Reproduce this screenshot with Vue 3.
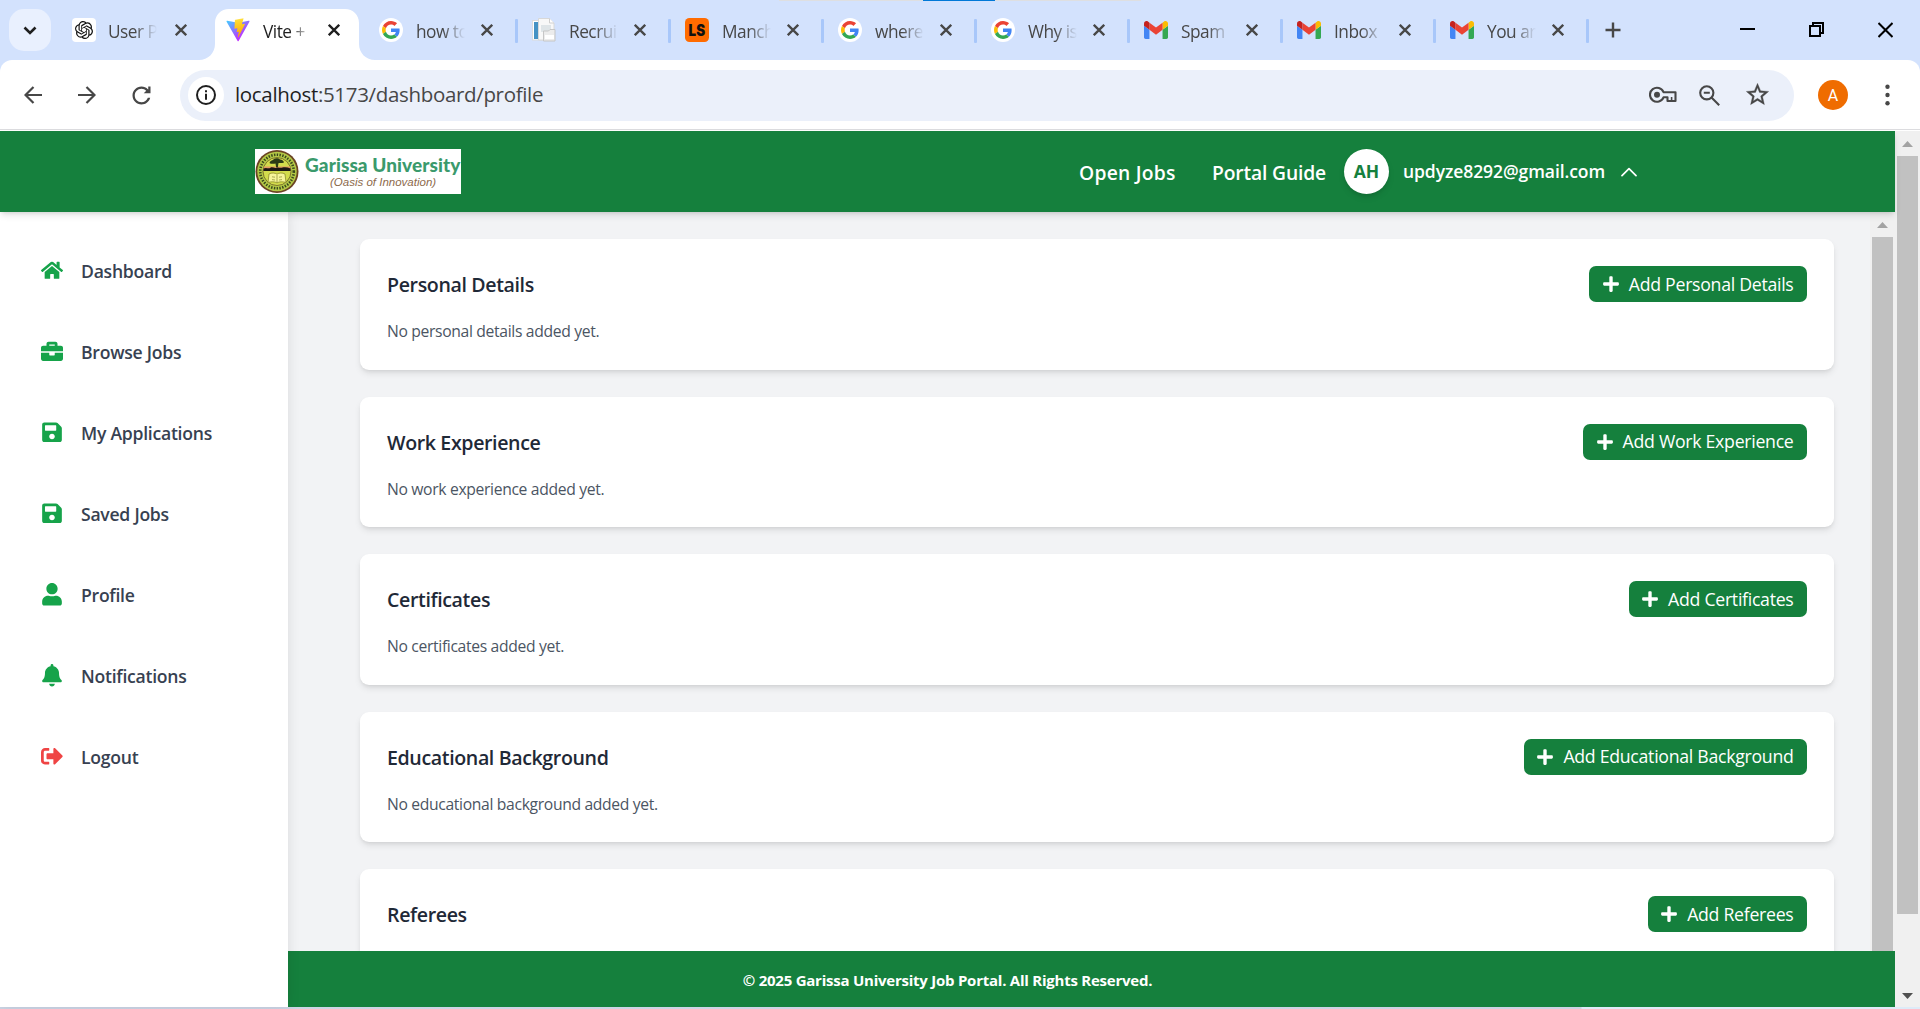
<script setup>
const tabs = [
  { icon: 'openai', title: 'User P' },
  { icon: 'vite', title: 'Vite +', active: true },
  { icon: 'google', title: 'how to', sep: true },
  { icon: 'page', title: 'Recrui', sep: true },
  { icon: 'ls', title: 'Manch', sep: true },
  { icon: 'google', title: 'where', sep: true },
  { icon: 'google', title: 'Why is', sep: true },
  { icon: 'gmail', title: 'Spam', sep: true },
  { icon: 'gmail', title: 'Inbox', sep: true },
  { icon: 'gmail', title: 'You ar', sep: true },
]

const icons = {
  home: { box: '0 0 576 512', d: 'M280.37 148.26L96 300.11V464a16 16 0 0 0 16 16l112.06-.29a16 16 0 0 0 15.92-16V368a16 16 0 0 1 16-16h64a16 16 0 0 1 16 16v95.64a16 16 0 0 0 16 16.05L464 480a16 16 0 0 0 16-16V300L295.67 148.26a12.19 12.19 0 0 0-15.3 0zM571.6 251.47L488 182.56V44.05a12 12 0 0 0-12-12h-56a12 12 0 0 0-12 12v72.61L318.47 43a48 48 0 0 0-61 0L4.34 251.47a12 12 0 0 0-1.6 16.9l25.5 31A12 12 0 0 0 45.15 301l235.22-193.74a12.19 12.19 0 0 1 15.3 0L530.9 301a12 12 0 0 0 16.9-1.6l25.5-31a12 12 0 0 0-1.7-16.93z' },
  briefcase: { box: '0 0 512 512', d: 'M320 336c0 8.84-7.16 16-16 16h-96c-8.84 0-16-7.16-16-16v-48H0v144c0 25.6 22.4 48 48 48h416c25.6 0 48-22.4 48-48V288H320v48zm144-208h-80V80c0-25.6-22.4-48-48-48H176c-25.6 0-48 22.4-48 48v48H48c-25.6 0-48 22.4-48 48v80h512v-80c0-25.6-22.4-48-48-48zm-144 0H192V96h128v32z' },
  save: { box: '0 0 448 512', d: 'M433.941 129.941l-83.882-83.882A48 48 0 0 0 316.118 32H48C21.49 32 0 53.49 0 80v352c0 26.51 21.49 48 48 48h352c26.51 0 48-21.49 48-48V163.882a48 48 0 0 0-14.059-33.941zM224 416c-35.346 0-64-28.654-64-64 0-35.346 28.654-64 64-64s64 28.654 64 64c0 35.346-28.654 64-64 64zm96-304.52V212c0 6.627-5.373 12-12 12H76c-6.627 0-12-5.373-12-12V108c0-6.627 5.373-12 12-12h228.52c3.183 0 6.235 1.264 8.485 3.515l3.48 3.48A11.996 11.996 0 0 1 320 111.48z' },
  user: { box: '0 0 448 512', d: 'M224 256c70.7 0 128-57.3 128-128S294.7 0 224 0 96 57.3 96 128s57.3 128 128 128zm89.6 32h-16.7c-22.2 10.2-46.9 16-72.9 16s-50.6-5.8-72.9-16h-16.7C60.2 288 0 348.2 0 422.4V464c0 26.5 21.5 48 48 48h352c26.5 0 48-21.5 48-48v-41.6c0-74.2-60.2-134.4-134.4-134.4z' },
  bell: { box: '0 0 448 512', d: 'M224 512c35.32 0 63.97-28.65 63.97-64H160.03c0 35.35 28.65 64 63.97 64zm215.39-149.71c-19.32-20.76-55.47-51.99-55.47-154.29 0-77.7-54.48-139.9-127.94-155.16V32c0-17.67-14.32-32-31.98-32s-31.98 14.33-31.98 32v20.84C118.56 68.1 64.08 130.3 64.08 208c0 102.3-36.15 133.53-55.47 154.29-6 6.45-8.66 14.16-8.61 21.71.11 16.4 12.98 32 32.1 32h383.8c19.12 0 32-15.6 32.1-32 .05-7.55-2.61-15.27-8.61-21.71z' },
  logout: { box: '0 0 512 512', d: 'M497 273L329 441c-15 15-41 4.5-41-17v-96H152c-13.3 0-24-10.7-24-24v-96c0-13.3 10.7-24 24-24h136V88c0-21.4 25.9-32 41-17l168 168c9.3 9.4 9.3 24.6 0 34zM192 436v-40c0-6.6-5.4-12-12-12H96c-17.7 0-32-14.3-32-32V160c0-17.7 14.3-32 32-32h84c6.6 0 12-5.4 12-12V76c0-6.6-5.4-12-12-12H96c-53 0-96 43-96 96v192c0 53 43 96 96 96h84c6.6 0 12-5.4 12-12z' },
}

const menu = [
  { icon: 'home', label: 'Dashboard' },
  { icon: 'briefcase', label: 'Browse Jobs' },
  { icon: 'save', label: 'My Applications' },
  { icon: 'save', label: 'Saved Jobs' },
  { icon: 'user', label: 'Profile' },
  { icon: 'bell', label: 'Notifications' },
  { icon: 'logout', label: 'Logout', danger: true },
]

const sections = [
  { title: 'Personal Details', empty: 'No personal details added yet.' },
  { title: 'Work Experience', empty: 'No work experience added yet.' },
  { title: 'Certificates', empty: 'No certificates added yet.' },
  { title: 'Educational Background', empty: 'No educational background added yet.' },
  { title: 'Referees' },
]
</script>

<template>
  <div class="window">
    <div class="tabstrip">
      <div class="topline"><i></i></div>
      <button class="tab-search" aria-label="Search tabs">
        <svg width="14" height="9" viewBox="0 0 14 9"><path d="M1.5 1.5 7 7l5.5-5.5" fill="none" stroke="#1f1f1f" stroke-width="2.6" /></svg>
      </button>
      <div v-for="(t, i) in tabs" :key="i" class="tab" :class="{ active: t.active, sep: t.sep, first: i === 0 }">
        <svg v-if="t.active" class="tab-shape" width="176" height="51" viewBox="0 0 176 51">
          <path d="M0 51C9 51 16 44 16 35V14C16 6 22 0 30 0H146C154 0 160 6 160 14V35C160 44 167 51 176 51Z" fill="#fff" />
        </svg>
        <svg v-if="t.icon === 'openai'" class="fav" viewBox="0 0 24 24">
          <rect width="24" height="24" rx="4" fill="#fff" />
          <path transform="translate(3 3) scale(.75)" fill="#111" d="M22.2819 9.8211a5.9847 5.9847 0 0 0-.5157-4.9108 6.0462 6.0462 0 0 0-6.5098-2.9A6.0651 6.0651 0 0 0 4.9807 4.1818a5.9847 5.9847 0 0 0-3.9977 2.9 6.0462 6.0462 0 0 0 .7427 7.0966 5.98 5.98 0 0 0 .511 4.9107 6.051 6.051 0 0 0 6.5146 2.9001A5.9847 5.9847 0 0 0 13.2599 24a6.0557 6.0557 0 0 0 5.7718-4.2058 5.9894 5.9894 0 0 0 3.9977-2.9001 6.0557 6.0557 0 0 0-.7475-7.0729zm-9.022 12.6081a4.4755 4.4755 0 0 1-2.8764-1.0408l.1419-.0804 4.7783-2.7582a.7948.7948 0 0 0 .3927-.6813v-6.7369l2.02 1.1686a.071.071 0 0 1 .038.052v5.5826a4.504 4.504 0 0 1-4.4945 4.4944zm-9.6607-4.1254a4.4708 4.4708 0 0 1-.5346-3.0137l.142.0852 4.783 2.7582a.7712.7712 0 0 0 .7806 0l5.8428-3.3685v2.3324a.0804.0804 0 0 1-.0332.0615L9.74 19.9502a4.4992 4.4992 0 0 1-6.1408-1.6464zM2.3408 7.8956a4.485 4.485 0 0 1 2.3655-1.9728V11.6a.7664.7664 0 0 0 .3879.6765l5.8144 3.3543-2.0201 1.1685a.0757.0757 0 0 1-.071 0l-4.8303-2.7865A4.504 4.504 0 0 1 2.3408 7.872zm16.5963 3.8558L13.1038 8.364 15.1192 7.2a.0757.0757 0 0 1 .071 0l4.8303 2.7913a4.4944 4.4944 0 0 1-.6765 8.1042v-5.6772a.79.79 0 0 0-.407-.667zm2.0107-3.0231l-.142-.0852-4.7735-2.7818a.7759.7759 0 0 0-.7854 0L9.409 9.2297V6.8974a.0662.0662 0 0 1 .0284-.0615l4.8303-2.7866a4.4992 4.4992 0 0 1 6.6802 4.66zM8.3065 12.863l-2.02-1.1638a.0804.0804 0 0 1-.038-.0567V6.0742a4.4992 4.4992 0 0 1 7.3757-3.4537l-.142.0805L8.704 5.459a.7948.7948 0 0 0-.3927.6813zm1.0976-2.3654l2.602-1.4998 2.6069 1.4998v2.9994l-2.5974 1.4997-2.6067-1.4997Z" />
        </svg>
        <svg v-else-if="t.icon === 'vite'" class="fav" viewBox="0 0 410 404">
          <defs>
            <linearGradient id="vite-a" x1="6" y1="33" x2="235" y2="344" gradientUnits="userSpaceOnUse"><stop stop-color="#41d1ff" /><stop offset="1" stop-color="#bd34fe" /></linearGradient>
            <linearGradient id="vite-b" x1="194.651" y1="8.818" x2="236.076" y2="292.989" gradientUnits="userSpaceOnUse"><stop stop-color="#ffea83" /><stop offset=".083" stop-color="#ffdd35" /><stop offset="1" stop-color="#ffa800" /></linearGradient>
          </defs>
          <path fill="url(#vite-a)" d="M399.641 59.5246L215.643 388.545C211.844 395.338 202.084 395.378 198.228 388.618L10.5817 59.5563C6.38087 52.1896 12.6802 43.2665 21.0281 44.7586L205.223 77.6824C206.398 77.8924 207.601 77.8904 208.776 77.6763L389.119 44.8058C397.439 43.2894 403.768 52.1434 399.641 59.5246Z" />
          <path fill="url(#vite-b)" d="M292.965 1.5744L156.801 28.2552C154.563 28.6937 152.906 30.5903 152.771 32.8664L144.395 174.33C144.198 177.662 147.258 180.248 150.51 179.498L188.42 170.749C191.967 169.931 195.172 173.055 194.443 176.622L183.18 231.775C182.422 235.487 185.907 238.661 189.532 237.56L212.947 230.446C216.577 229.344 220.065 232.527 219.297 236.242L201.398 322.875C200.278 328.294 207.486 331.249 210.492 326.603L212.5 323.5L323.454 102.072C325.312 98.3645 322.108 94.137 318.036 94.9228L279.014 102.454C275.347 103.161 272.227 99.746 273.262 96.1583L298.731 7.86689C299.767 4.27314 296.636 0.855181 292.965 1.5744Z" />
        </svg>
        <svg v-else-if="t.icon === 'google'" class="fav" viewBox="0 0 24 24">
          <circle cx="12" cy="12" r="12" fill="#fff" />
          <g transform="translate(3 3) scale(.375)">
            <path fill="#EA4335" d="M24 9.5c3.54 0 6.71 1.22 9.21 3.6l6.85-6.85C35.9 2.38 30.47 0 24 0 14.62 0 6.51 5.38 2.56 13.22l7.98 6.19C12.43 13.72 17.74 9.5 24 9.5z" />
            <path fill="#4285F4" d="M46.98 24.55c0-1.57-.15-3.09-.38-4.55H24v9.02h12.94c-.58 2.96-2.26 5.48-4.78 7.18l7.73 6c4.51-4.18 7.09-10.36 7.09-17.65z" />
            <path fill="#FBBC05" d="M10.53 28.59c-.48-1.45-.76-2.99-.76-4.59s.27-3.14.76-4.59l-7.98-6.19C.92 16.46 0 20.12 0 24c0 3.88.92 7.54 2.56 10.78l7.97-6.19z" />
            <path fill="#34A853" d="M24 48c6.48 0 11.93-2.13 15.89-5.81l-7.73-6c-2.15 1.45-4.92 2.3-8.16 2.3-6.26 0-11.57-4.22-13.47-9.91l-7.98 6.19C6.51 42.62 14.62 48 24 48z" />
          </g>
        </svg>
        <svg v-else-if="t.icon === 'page'" class="fav" viewBox="0 0 24 24">
          <rect x=".5" y="2.5" width="12" height="19.5" fill="#fff" stroke="#dcdcdc" />
          <rect x="2" y="4" width="4" height="17" fill="#4592c4" />
          <path d="M6.5.5h11L22 5v17H6.5z" fill="#f8f8f8" stroke="#d8d8d8" />
          <path d="M17.5.5V5H22" fill="#fff" stroke="#cfcfcf" />
          <path d="M9 7h10v7H9z" fill="#dfe5e8" />
          <path d="M11.5 13h5l1.5-1.5h5V23H11.500z" fill="#ececec" stroke="#c6c6c6" />
          <path d="M13 17h9v4h-9z" fill="#fff" />
        </svg>
        <svg v-else-if="t.icon === 'ls'" class="fav" viewBox="0 0 24 24">
          <rect width="24" height="24" rx="4.5" fill="#ff6b00" />
          <text x="3.6" y="17.6" class="ls-text" textLength="16.5" lengthAdjust="spacingAndGlyphs">LS</text>
        </svg>
        <svg v-else class="fav" viewBox="52 31 88 88">
          <path fill="#4285f4" d="M58 108h14V74L52 59v43c0 3.32 2.69 6 6 6" />
          <path fill="#34a853" d="M120 108h14c3.32 0 6-2.69 6-6V59l-20 15" />
          <path fill="#fbbc04" d="M120 48v26l20-15v-8c0-7.42-8.47-11.65-14.4-7.2" />
          <path fill="#ea4335" d="M72 74V48l24 18 24-18v26L96 92" />
          <path fill="#c5221f" d="M52 51v8l20 15V48l-5.6-4.2c-5.94-4.45-14.4-.22-14.4 7.2" />
        </svg>
        <span class="tab-title">{{ t.title }}</span>
        <svg class="tab-close" width="12" height="12" viewBox="0 0 12 12"><path d="M.8.8l10.4 10.4M11.2.8.8 11.2" /></svg>
      </div>
      <svg class="new-tab" width="16" height="16" viewBox="0 0 16 16"><path d="M8 .5v15M.5 8h15" stroke="#474747" stroke-width="2.4" /></svg>
      <div class="win-controls">
        <svg width="15" height="15" viewBox="0 0 15 15"><path d="M0 7h15" stroke="#000" stroke-width="2" /></svg>
        <svg width="15" height="15" viewBox="0 0 15 15"><path d="M1 4h10v10H1zM4 4V1h10v10h-3" fill="none" stroke="#000" stroke-width="2" /></svg>
        <svg width="15" height="16" viewBox="0 0 15 16"><path d="M.5 1l14 14M14.5 1l-14 14" stroke="#000" stroke-width="2" /></svg>
      </div>
    </div>

    <div class="toolbar-wrap">
      <div class="toolbar">
        <svg class="nav" width="18" height="18" viewBox="0 0 18 18"><path d="M18 9H2M9.5 1 1.5 9l8 8" /></svg>
        <svg class="nav" width="18" height="18" viewBox="0 0 18 18"><path d="M0 9h16M8.5 1l8 8-8 8" /></svg>
        <svg class="reload" width="27" height="27" viewBox="0 0 24 24"><path fill="#474747" d="M17.65 6.35C16.2 4.9 14.21 4 12 4c-4.42 0-7.99 3.58-7.99 8s3.57 8 7.99 8c3.73 0 6.84-2.55 7.73-6h-2.08c-.82 2.33-3.04 4-5.65 4-3.31 0-6-2.69-6-6s2.69-6 6-6c1.66 0 3.14.69 4.22 1.78L14 10h6V4h-2v2.6z" /></svg>
        <div class="omnibox">
          <span class="info">
            <svg width="20" height="20" viewBox="0 0 20 20"><circle cx="10" cy="10" r="9" fill="none" stroke="#1f1f1f" stroke-width="2" /><path d="M10 8.8v6M10 5.2v2" stroke="#1f1f1f" stroke-width="2" /></svg>
          </span>
          <span class="url"><b>localhost</b>:5173/dashboard/profile</span>
          <svg class="key" width="28" height="18" viewBox="0 0 28 18">
            <path d="M14.5 6.2A7 7 0 1 0 14.5 11.3H18.5V15H26.5V6.2Z" fill="none" stroke="#474747" stroke-width="2.1" stroke-linejoin="round" />
            <path d="M22.6 15v-4" stroke="#474747" stroke-width="1.6" /><circle cx="8" cy="8.8" r="3" fill="#474747" />
          </svg>
          <svg class="zoom" width="21" height="21" viewBox="0 0 21 21"><circle cx="7.8" cy="7.8" r="6.6" fill="none" stroke="#474747" stroke-width="2.1" /><path d="M12.5 12.5l7.7 7.7M4.8 7.8h6" stroke="#474747" stroke-width="2.1" /></svg>
          <svg class="star" width="27" height="27" viewBox="0 0 24 24"><path fill="#474747" stroke="#474747" stroke-width=".25" d="M22 9.24l-7.19-.62L12 2 9.19 8.63 2 9.24l5.46 4.73L5.82 21 12 17.27 18.18 21l-1.63-7.03L22 9.24zM12 15.4l-3.76 2.27 1-4.28-3.32-2.88 4.38-.38L12 6.1l1.71 4.04 4.38.38-3.32 2.88 1 4.28L12 15.4z" /></svg>
        </div>
        <span class="account">A</span>
        <svg class="dots" width="5" height="22" viewBox="0 0 5 22"><circle cx="2.5" cy="2.7" r="2.2" /><circle cx="2.5" cy="11" r="2.2" /><circle cx="2.5" cy="19.3" r="2.2" /></svg>
      </div>
    </div>

    <div class="viewport">
      <div class="app">
        <header class="header">
          <div class="logo">
            <svg width="44" height="45" viewBox="0 0 44 45">
              <circle cx="22" cy="22.5" r="21.5" fill="#6b4423" />
              <circle cx="22" cy="22.5" r="19.7" fill="#b3c846" />
              <circle cx="22" cy="22.5" r="16.8" fill="none" stroke="#39471c" stroke-width="2.6" stroke-dasharray="1.4 1.4" />
              <circle cx="22" cy="22.5" r="14" fill="#d3dc4c" stroke="#6a5a24" stroke-width=".8" />
              <path d="M9 17.5h26a14 14 0 0 1 .6 4H8.4a14 14 0 0 1 .6-4z" fill="#e29a62" />
              <path d="M14.5 14c1-3 3.5-2.5 4.5-4 2-1.2 5-.5 6 .6 2 .3 4 1.4 4 3-2 .8-4 .3-5.6.6l-.5 4h-1.8l-.6-3.6c-2 .4-4.6.4-6-.6z" fill="#2b3a16" />
              <path d="M8.4 19.6c3-1.6 5 .6 7-.8s4 .8 6 0 4 .6 6-.2 5-.5 8.200.8v2.600H8.400z" fill="#1b1713" />
              <path d="M14 25c2.5-1.5 6-1.2 8 .2 2-1.4 5.5-1.7 8-.2l1 8.500c-3-1-7-1-9 .4-2-1.400-6-1.400-9-.4z" fill="#f6f59a" stroke="#8b8c2a" stroke-width=".8" />
              <path d="M22 26v7.500M17 27.800l3 .4M24 28.200l3-.4M17 30.600l3 .4M24 31l3-.4" stroke="#8a8a32" stroke-width=".7" />
            </svg>
            <div class="logo-text"><strong>Garissa University</strong><em>(Oasis of Innovation)</em></div>
          </div>
          <nav class="links">
            <a class="l1">Open Jobs</a>
            <a class="l2">Portal Guide</a>
            <span class="avatar">AH</span>
            <span class="email">updyze8292@gmail.com</span>
            <svg width="16" height="10" viewBox="0 0 16 10"><path d="M1 8.7l7-7 7 7" fill="none" stroke="#fff" stroke-width="1.7" stroke-linecap="round" stroke-linejoin="round" /></svg>
          </nav>
        </header>
        <div class="body">
          <aside class="sidebar">
            <a v-for="m in menu" :key="m.label" class="item" :class="{ danger: m.danger }">
              <svg width="22" height="22.5" :viewBox="icons[m.icon].box"><path fill="currentColor" :d="icons[m.icon].d" /></svg>
              <span>{{ m.label }}</span>
            </a>
          </aside>
          <div class="content">
            <div class="scroll-area">
              <main class="cards">
                <section v-for="s in sections" :key="s.title" class="card">
                  <div class="card-text">
                    <h2>{{ s.title }}</h2>
                    <p v-if="s.empty">{{ s.empty }}</p>
                  </div>
                  <button class="add">
                    <svg width="16" height="18" viewBox="0 0 448 512"><path fill="#fff" d="M416 208H272V64c0-17.67-14.33-32-32-32h-32c-17.67 0-32 14.33-32 32v144H32c-17.67 0-32 14.33-32 32v32c0 17.67 14.33 32 32 32h144v144c0 17.67 14.33 32 32 32h32c17.67 0 32-14.33 32-32V304h144c17.67 0 32-14.33 32-32v-32c0-17.67-14.33-32-32-32z" /></svg>
                    <span>Add {{ s.title }}</span>
                  </button>
                </section>
              </main>
              <div class="scrollbar">
                <svg width="11" height="6" viewBox="0 0 11 6"><path d="M5.5 0 11 6H0z" fill="#a3a3a3" /></svg>
                <div class="thumb"></div>
              </div>
            </div>
            <footer class="footer"><span>© 2025 Garissa University Job Portal. All Rights Reserved.</span></footer>
          </div>
        </div>
      </div>
      <div class="scrollbar outer">
        <svg width="11" height="6" viewBox="0 0 11 6"><path d="M5.5 0 11 6H0z" fill="#a3a3a3" /></svg>
        <div class="thumb"></div>
        <svg class="down" width="11" height="6" viewBox="0 0 11 6"><path d="M0 0h11L5.5 6z" fill="#505050" /></svg>
      </div>
    </div>
    <div class="edge"></div>
  </div>
</template>

<style>
html, body { margin: 0; overflow: hidden; }
</style>

<style scoped>
* { box-sizing: border-box; }
svg { display: block; flex: none; }
button { border: 0; padding: 0; font: inherit; }
h2, p { margin: 0; }
.window { width: 1920px; height: 1009px; display: flex; flex-direction: column; overflow: hidden; font-family: "Open Sans", "Noto Sans", sans-serif; white-space: nowrap; background: #fff; }

.tabstrip { position: relative; height: 60px; flex: none; display: flex; background: #d3e2fd; }
.topline { position: absolute; top: 0; left: 779px; width: 362px; height: 1px; background: #dedfe1; }
.topline i { display: block; width: 72px; height: 1px; margin-left: 144px; background: #0078d7; }
.tab-search { width: 42px; height: 42px; margin: 9px 6px 0 9px; border-radius: 15px; background: #e9f0fe; display: flex; align-items: center; justify-content: center; }
.tab { position: relative; width: 153px; height: 60px; flex: none; display: flex; align-items: flex-start; color: #474747; }
.tab-shape { position: absolute; left: -11px; top: 9px; }
.fav { position: relative; width: 24px; height: 24px; margin: 18px 0 0 16px; }
.first .fav { margin-left: 15px; }
.tab-title { position: relative; width: 49px; margin: 19px 0 0 13px; font-size: 17.3px; line-height: 26px; letter-spacing: -.5px; -webkit-mask-image: linear-gradient(90deg, #000 55%, transparent); mask-image: linear-gradient(90deg, #000 55%, transparent); }
.first .tab-title { margin-left: 12px; margin-right: 2px; }
.tab-close { position: relative; margin: 24px 0 0 16px; }
.tab-close path { stroke: #474747; stroke-width: 2.3; }
.active { color: #1f1f1f; }
.active .tab-close path { stroke: #1f1f1f; }
.sep::after { content: ""; position: absolute; left: 152px; top: 19px; width: 3px; height: 24px; border-radius: 1px; background: #a8c7fa; }
.ls-text { font: 900 15.5px "Inter", sans-serif; fill: #111; }
.new-tab { margin: 22px 0 0 18px; }
.win-controls { display: flex; gap: 54px; margin: 22px 27px 0 auto; }

.toolbar-wrap { height: 71px; flex: none; background: #d3e2fd; }
.toolbar { height: 71px; border-radius: 12px 12px 0 0; background: linear-gradient(#fff 69px, #dcdcdf 69px, #dcdcdf 70px, #fff 70px); display: flex; align-items: center; padding: 0 30px 1px 24px; }
.nav { margin-right: 36px; }
.nav path { fill: none; stroke: #474747; stroke-width: 2.2; }
.reload { margin: 0 25.5px 0 -4.5px; }
.omnibox { width: 1614px; height: 51px; flex: none; border-radius: 26px; background: #ebf0fa; display: flex; align-items: center; padding-left: 8px; }
.info { width: 36px; height: 36px; border-radius: 50%; background: #fff; display: flex; align-items: center; justify-content: center; }
.url { margin: 0 0 2px 11px; flex: 1; font-size: 20.5px; line-height: 30px; letter-spacing: -.33px; color: #474747; }
.url b { font-weight: 400; color: #1f1f1f; }
.zoom { margin-left: 22.5px; }
.star { margin: 0 23px 1px 24px; }
.account { width: 30px; height: 30px; margin-left: 24px; border-radius: 50%; background: #ef6c00; color: #fff; font: 16px/31px Roboto, sans-serif; text-align: center; }
.dots { margin-left: auto; fill: #474747; }

.viewport { height: 876px; flex: none; display: flex; }
.app { width: 1895px; display: flex; flex-direction: column; }
.header { position: relative; z-index: 2; height: 81px; flex: none; padding: 0 258px 0 255px; display: flex; align-items: center; justify-content: space-between; background: #15803d; box-shadow: 0 4px 7px -1px rgba(0,0,0,.12), 0 2px 4px -2px rgba(0,0,0,.12); }
.logo { width: 206px; height: 45px; background: #fff; display: flex; overflow: hidden; }
.logo-text { margin-left: 6px; display: flex; flex-direction: column; }
.logo-text strong { font: 900 19px/24px Lato, sans-serif; letter-spacing: .08px; margin-top: 4px; color: #3a9a6c; }
.logo-text em { font: italic 11.5px/13px "Liberation Sans", sans-serif; margin: -1px 0 0 25px; color: #8d6a4c; }
.links { display: flex; align-items: center; color: #fff; font-weight: 600; }
.links a { font-size: 19.3px; line-height: 27px; padding-top: 2px; letter-spacing: -.15px; }
.l1 { width: 133px; }
.links .l1 { letter-spacing: .25px; }
.l2 { width: 132px; }
.avatar { width: 45px; height: 45px; border-radius: 50%; background: #fff; color: #15803d; font-weight: 700; font-size: 17.5px; line-height: 45px; text-align: center; box-shadow: 0 4px 7px -1px rgba(0,0,0,.12), 0 2px 4px -2px rgba(0,0,0,.12); }
.email { width: 218px; margin-left: 14px; font-size: 17.5px; line-height: 27px; letter-spacing: -.08px; }

.body { position: relative; flex: 1; display: flex; min-height: 0; }
.sidebar { position: relative; z-index: 1; width: 288px; flex: none; padding: 18px 0 0 41px; background: #fff; box-shadow: 0 0 12px rgba(0,0,0,.1); }
.item { height: 81px; display: flex; align-items: center; color: #16a34a; }
.item span { margin: 1px 0 0 18px; font-size: 17.6px; line-height: 27px; letter-spacing: -.26px; font-weight: 600; color: #374151; }
.danger { color: #ef4444; }
.content { flex: 1; display: flex; flex-direction: column; min-width: 0; }
.scroll-area { height: 739px; display: flex; overflow: hidden; background: #f2f3f5; }
.cards { flex: 1; padding: 27px 36px 0 72px; display: flex; flex-direction: column; gap: 27px; }
.card { height: 130.5px; flex: none; padding: 27px; border-radius: 9px; background: #fff; display: flex; justify-content: space-between; align-items: flex-start; box-shadow: 0 4px 7px -1px rgba(0,0,0,.1), 0 2px 4px -2px rgba(0,0,0,.1); }
.card h2 { font-size: 19.6px; line-height: 31px; margin-top: 3px; font-weight: 600; letter-spacing: -.38px; color: #1f2937; }
.card p { margin-top: 20px; font-size: 15.7px; line-height: 23px; letter-spacing: -.34px; color: #4b5563; }
.add { height: 36px; padding: 0 13.5px; border-radius: 7px; background: #15803d; color: #fff; display: flex; align-items: center; }
.add span { margin-left: 10px; font-size: 17.7px; line-height: 27px; letter-spacing: -.28px; }
.scrollbar { width: 25px; flex: none; background: #f0f0f0; display: flex; flex-direction: column; align-items: center; padding-top: 10px; }
.thumb { width: 21px; height: 714px; margin-top: 9px; background: #c1c1c1; }
.outer .thumb { height: 758px; }
.down { margin-top: 79px; }
.footer { height: 56px; padding: 2px 288px 0 0; background: #15803d; color: #fff; display: flex; align-items: center; justify-content: center; font-size: 15px; letter-spacing: -.24px; font-weight: 700; }
.edge { flex: 1; background: linear-gradient(90deg, #cdd6e6, #ccd3e4 1581px, #deebf8 1582px); }
</style>
